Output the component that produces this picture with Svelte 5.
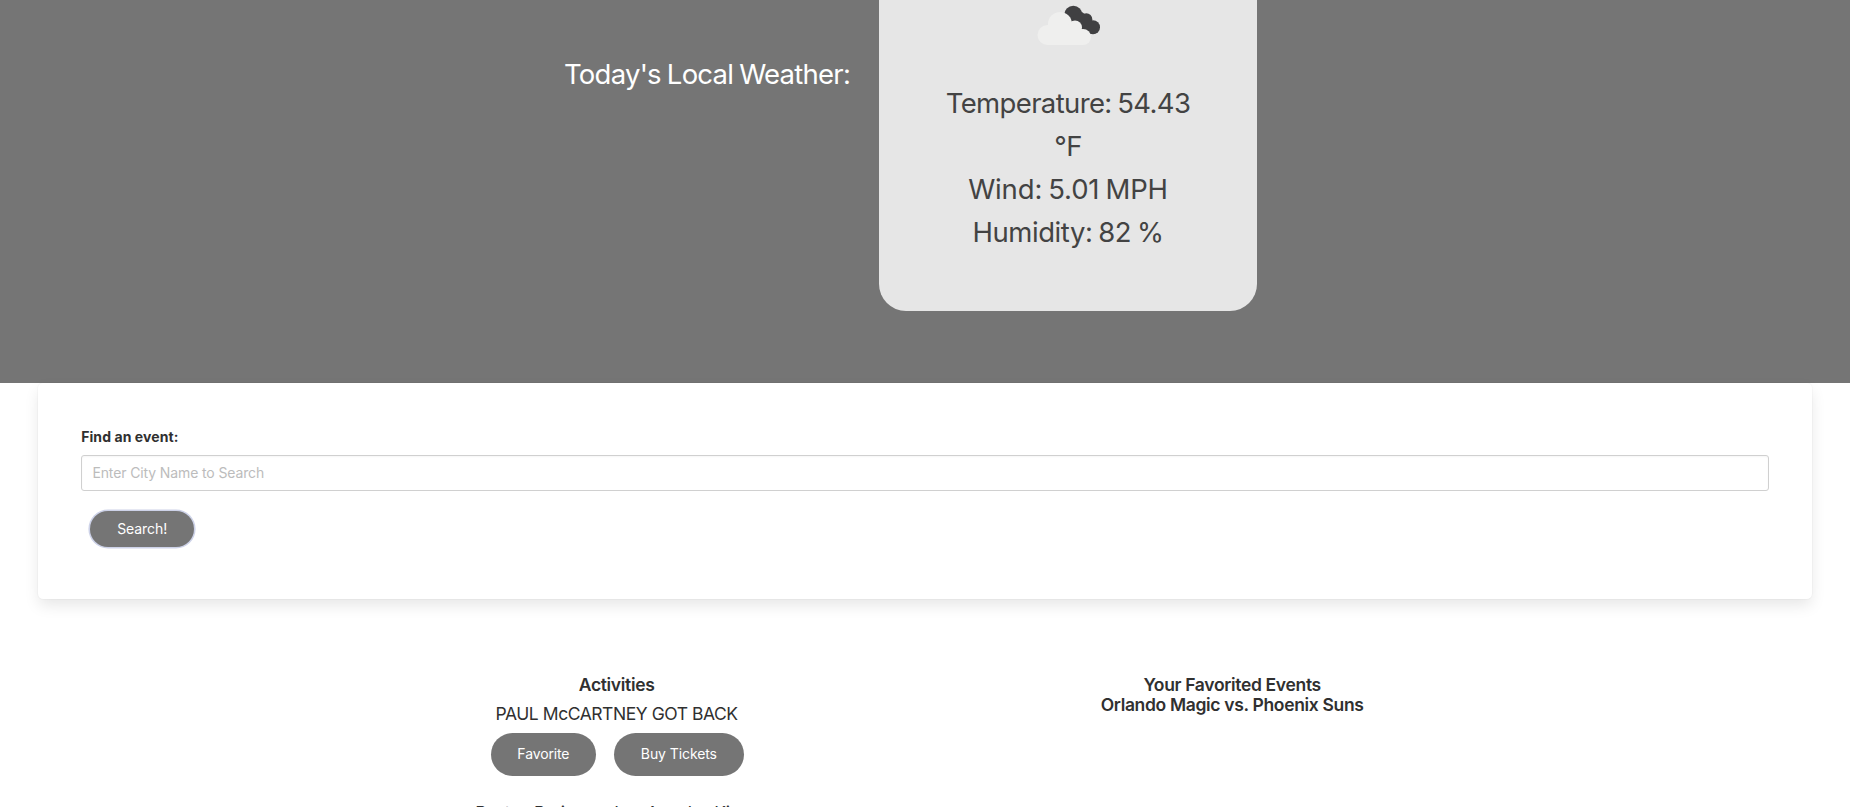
<script>
  let city = $state('');
  const activities = [
    { name: 'PAUL McCARTNEY GOT BACK', tracking: -0.45 },
    { name: 'Boston Bruins vs. Los Angeles Kings', tracking: -0.54 }
  ];
  const favorites = ['Orlando Magic vs. Phoenix Suns'];
</script>

<main>
  <section class="hero">
    <h2>Today's Local Weather:</h2>
    <article class="weather">
      <svg viewBox="0 0 96 60" width="96" height="60" aria-hidden="true">
        <g fill="#404042">
          <circle cx="53.3" cy="15" r="9.2" />
          <circle cx="66.3" cy="19.3" r="6" />
          <circle cx="73" cy="27.3" r="7" />
          <path d="M53 15 L62 12 L66 15 L72 20 L74 27 L72 34 L58 32 Z" />
        </g>
        <g fill="#efefee">
          <circle cx="27.5" cy="35" r="10" />
          <circle cx="40" cy="24" r="12" />
          <circle cx="55" cy="27.5" r="7" />
          <circle cx="63" cy="37" r="8" />
          <path d="M27.5 25 L55 24 L63 30 L63 45 L27.5 45 Z" />
        </g>
      </svg>
      <p class="temp">Temperature: 54.43</p>
      <p class="unit">°F</p>
      <p class="wind">Wind: 5.01 MPH</p>
      <p class="humidity">Humidity: 82 %</p>
    </article>
  </section>

  <form class="search" onsubmit={(e) => e.preventDefault()}>
    <label for="city">Find an event:</label>
    <input id="city" type="text" placeholder="Enter City Name to Search" bind:value={city} />
    <button class="find" type="submit">Search!</button>
  </form>

  <section class="columns">
    <div class="column">
      <h3>Activities</h3>
      {#each activities as activity}
        <div class="event">
          <p style:letter-spacing="{activity.tracking}px">{activity.name}</p>
          <div class="actions">
            <button class="favorite">Favorite</button>
            <button class="buy">Buy Tickets</button>
          </div>
        </div>
      {/each}
    </div>
    <div class="column">
      <h3>Your Favorited Events</h3>
      {#each favorites as favorite}
        <h3>{favorite}</h3>
      {/each}
    </div>
  </section>
</main>

<style>
  :global(body) {
    margin: 0;
    background: #fff;
  }
  main {
    height: 807px;
    overflow: hidden;
    font-family: Inter, sans-serif;
    font-size: 14px;
    color: #303030;
  }
  h2, h3, p {
    margin: 0;
  }
  .hero {
    box-sizing: border-box;
    height: 383px;
    padding-left: 564px;
    display: flex;
    align-items: flex-start;
    background: #757575;
  }
  h2 {
    width: 315px;
    margin-top: 53px;
    font-size: 27.5px;
    line-height: 43.2px;
    font-weight: 400;
    letter-spacing: -0.76px;
    word-spacing: -1px;
    white-space: nowrap;
    color: #fff;
  }
  .weather {
    box-sizing: border-box;
    width: 378px;
    height: 311px;
    display: flex;
    flex-direction: column;
    align-items: center;
    background: #e6e6e6;
    border-radius: 0 0 27px 27px;
    color: #434343;
    font-size: 27.5px;
    line-height: 43.2px;
    word-spacing: -1.5px;
    white-space: nowrap;
  }
  .weather svg {
    display: block;
    margin-bottom: 21.8px;
  }
  .temp { letter-spacing: -0.63px; }
  .unit { letter-spacing: -0.6px; }
  .wind { letter-spacing: -0.15px; }
  .humidity { letter-spacing: -0.44px; }

  .search {
    box-sizing: border-box;
    height: 216px;
    margin: 0 38px;
    padding: 43.2px;
    display: flex;
    flex-direction: column;
    align-items: flex-start;
    background: #fff;
    border-radius: 5.4px;
    box-shadow: 0 7.2px 14.4px -1.8px rgba(10, 10, 10, 0.1), 0 0 0 1px rgba(10, 10, 10, 0.02);
  }
  label {
    font-weight: 700;
    line-height: 21.6px;
    letter-spacing: 0.08px;
    margin-bottom: 7.2px;
  }
  input {
    box-sizing: border-box;
    width: 100%;
    height: 36px;
    padding: 0 10.2px;
    border: 1px solid #d0d0d0;
    border-radius: 3px;
    background: #fff;
    box-shadow: inset 0 1px 2px rgba(10, 10, 10, 0.04);
    font: 400 14px Inter, sans-serif;
    letter-spacing: -0.12px;
    color: #303030;
    outline: none;
  }
  input::placeholder {
    color: #bcbcbc;
    opacity: 1;
  }
  button {
    box-sizing: border-box;
    padding: 0;
    border: 0;
    border-radius: 22px;
    background: #757575;
    color: #fff;
    font: 400 14px Inter, sans-serif;
    text-align: center;
  }
  .find {
    width: 104px;
    height: 36px;
    margin: 20px 0 0 9px;
    letter-spacing: -0.08px;
    box-shadow: 0 0 0 1.6px #cdd2e8;
  }

  .columns {
    display: grid;
    grid-template-columns: 1fr 1fr;
    padding: 75.5px 309px 0 308.5px;
    text-align: center;
  }
  h3 {
    font-size: 17.5px;
    font-weight: 600;
    line-height: 20.25px;
    letter-spacing: -0.33px;
  }
  .column + .column {
    padding-right: 1.5px;
  }
  .event {
    margin-bottom: 22.6px;
  }
  .event p {
    font-size: 17.5px;
    line-height: 27px;
  }
  h3 + .event {
    margin-top: 5.4px;
  }
  .actions {
    display: flex;
    justify-content: center;
    gap: 18px;
    margin-top: 5.9px;
    padding-left: 1.5px;
  }
  .actions button {
    height: 43px;
    padding-bottom: 1.5px;
  }
  .favorite {
    width: 105px;
    letter-spacing: -0.13px;
  }
  .buy {
    width: 130px;
    letter-spacing: -0.09px;
  }
</style>
